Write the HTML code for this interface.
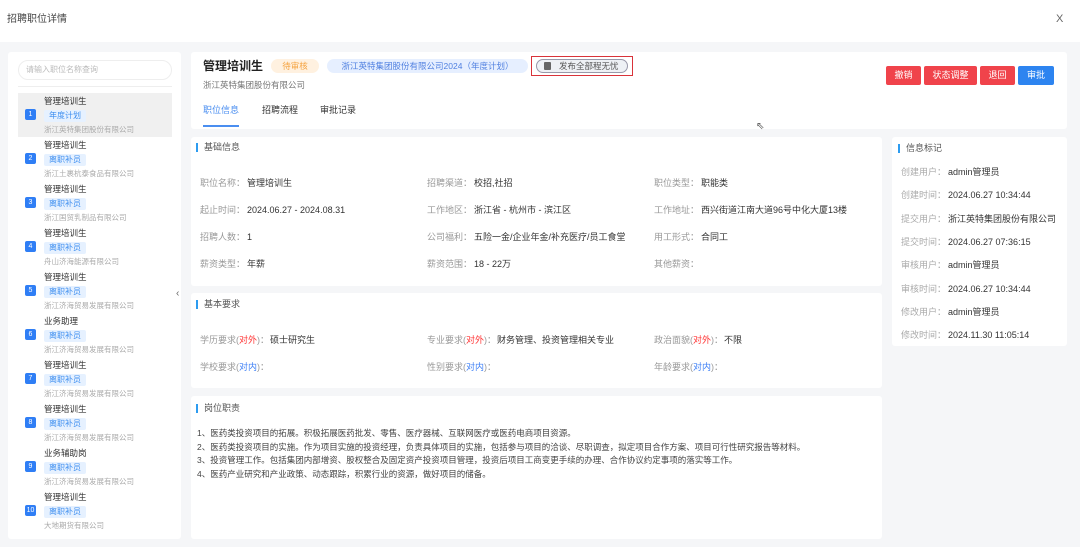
<!DOCTYPE html>
<html><head><meta charset="utf-8"><style>
*{margin:0;padding:0;box-sizing:border-box}
body{width:1080px;height:547px;overflow:hidden;background:#fff;font-family:"Liberation Sans","Noto Sans CJK SC",sans-serif;color:#333;font-size:9px;position:relative}
.a{position:absolute;white-space:nowrap;line-height:12px}
.card{position:absolute;background:#fff;border-radius:3px}
.gray{color:#999}
.sec{position:absolute;font-size:9px;color:#555;padding-left:6px;border-left:2px solid #2d9cf0;line-height:9px}
.tag{display:inline-block;background:#e6f1ff;color:#3d8ef0;font-size:8px;padding:0 5px;line-height:12px;border-radius:2px}
.num{position:absolute;left:25px;width:11px;height:11px;background:#2f7ef5;color:#fff;font-size:7px;text-align:center;line-height:11px;border-radius:2px}
.btn{position:absolute;top:66px;height:19px;line-height:19px;color:#fff;font-size:9px;text-align:center;border-radius:2px;background:#f0434b}
.r{color:#f33}.b{color:#3d7ff5}
</style></head><body>
<div class="a" style="left:7px;top:14px;font-size:10px;color:#444">招聘职位详情</div>
<div class="a" style="left:1056px;top:13px;font-size:11px;color:#666">X</div>
<div style="position:absolute;left:0;top:42px;width:1080px;height:505px;background:#f5f6f8"></div>

<div class="card" style="left:8px;top:52px;width:173px;height:487px"></div>
<div style="position:absolute;left:18px;top:60px;width:154px;height:20px;border:1px solid #eee;border-radius:10px"></div>
<div class="a" style="left:26px;top:64px;font-size:8px;color:#bbb">请输入职位名称查询</div>
<div style="position:absolute;left:18px;top:86px;width:154px;height:1px;background:#eee"></div>
<div style="position:absolute;left:18px;top:93px;width:154px;height:44px;background:#f0f0f0"></div>
<div id="list"></div>
<div class="a" style="left:176px;top:288px;width:11px;height:14px;font-size:10px;color:#666">‹</div>

<div class="card" style="left:191px;top:52px;width:876px;height:77px"></div>
<div class="a" style="left:203px;top:59px;font-size:12px;font-weight:bold;color:#222;line-height:14px">管理培训生</div>
<div class="a" style="left:271px;top:59px;width:48px;height:14px;background:#fff1e0;color:#f5a340;border-radius:7px;font-size:8.5px;text-align:center;line-height:14px">待审核</div>
<div class="a" style="left:327px;top:59px;width:201px;height:14px;background:#e6efff;color:#5080e0;border-radius:7px;font-size:8.5px;text-align:center;line-height:14px">浙江英特集团股份有限公司2024（年度计划）</div>
<div class="a" style="left:531px;top:56px;width:102px;height:20px;border:1.5px solid #d9333a"></div>
<div class="a" style="left:536px;top:59px;width:92px;height:14px;border:1px solid #99a;background:#eef1f5;border-radius:7px;font-size:8.5px;color:#555;line-height:12px;padding-left:22px">发布全部程无忧</div>
<div class="a" style="left:544px;top:62px;width:7px;height:8px;background:#666;border-radius:1px"></div>
<div class="a" style="left:203px;top:79px;font-size:8.5px;color:#777">浙江英特集团股份有限公司</div>
<div class="a" style="left:203px;top:104px;font-size:9px;color:#4a8ef0">职位信息</div>
<div class="a" style="left:203px;top:125px;width:36px;height:2px;background:#4a8ef0"></div>
<div class="a" style="left:262px;top:104px;font-size:9px">招聘流程</div>
<div class="a" style="left:320px;top:104px;font-size:9px">审批记录</div>
<div class="btn" style="left:886px;width:35px">撤销</div>
<div class="btn" style="left:924px;width:53px">状态调整</div>
<div class="btn" style="left:980px;width:35px">退回</div>
<div class="btn" style="left:1018px;width:36px;background:#2d84f0">审批</div>
<div class="a" style="left:756px;top:121px;font-size:10px;color:#555">⇖</div>

<div class="card" style="left:191px;top:137px;width:691px;height:149px"></div>
<div class="sec" style="left:196px;top:143px">基础信息</div>
<div id="basic"></div>

<div class="card" style="left:191px;top:293px;width:691px;height:95px"></div>
<div class="sec" style="left:196px;top:300px">基本要求</div>
<div class="a gray" style="left:200px;top:334px">学历要求(<span class="r">对外</span>)：</div><div class="a" style="left:270px;top:334px">硕士研究生</div>
<div class="a gray" style="left:427px;top:334px">专业要求(<span class="r">对外</span>)：</div><div class="a" style="left:497px;top:334px">财务管理、投资管理相关专业</div>
<div class="a gray" style="left:654px;top:334px">政治面貌(<span class="r">对外</span>)：</div><div class="a" style="left:724px;top:334px">不限</div>
<div class="a gray" style="left:200px;top:361px">学校要求(<span class="b">对内</span>)：</div>
<div class="a gray" style="left:427px;top:361px">性别要求(<span class="b">对内</span>)：</div>
<div class="a gray" style="left:654px;top:361px">年龄要求(<span class="b">对内</span>)：</div>

<div class="card" style="left:191px;top:396px;width:691px;height:143px"></div>
<div class="sec" style="left:196px;top:404px">岗位职责</div>
<div class="a" style="left:197px;top:427px;font-size:8.5px;line-height:13.5px;color:#444">1、医药类投资项目的拓展。积极拓展医药批发、零售、医疗器械、互联网医疗或医药电商项目资源。<br>2、医药类投资项目的实施。作为项目实施的投资经理，负责具体项目的实施，包括参与项目的洽谈、尽职调查，拟定项目合作方案、项目可行性研究报告等材料。<br>3、投资管理工作。包括集团内部增资、股权整合及固定资产投资项目管理，投资后项目工商变更手续的办理、合作协议约定事项的落实等工作。<br>4、医药产业研究和产业政策、动态跟踪，积累行业的资源，做好项目的储备。</div>

<div class="card" style="left:892px;top:137px;width:175px;height:209px"></div>
<div class="sec" style="left:898px;top:144px">信息标记</div>
<div id="marks"></div>

<script>
var L=[["管理培训生","年度计划","浙江英特集团股份有限公司"],["管理培训生","离职补员","浙江土裹杭泰食品有限公司"],["管理培训生","离职补员","浙江国贸乳制品有限公司"],["管理培训生","离职补员","舟山济海能源有限公司"],["管理培训生","离职补员","浙江济海贸易发展有限公司"],["业务助理","离职补员","浙江济海贸易发展有限公司"],["管理培训生","离职补员","浙江济海贸易发展有限公司"],["管理培训生","离职补员","浙江济海贸易发展有限公司"],["业务辅助岗","离职补员","浙江济海贸易发展有限公司"],["管理培训生","离职补员","大地期货有限公司"]];
var h="";L.forEach(function(x,i){var y=93+44*i;
h+='<div class="a" style="left:44px;top:'+(y+2)+'px;font-size:8.5px;color:#333">'+x[0]+'</div>';
h+='<div class="a" style="left:44px;top:'+(y+16)+'px"><span class="tag">'+x[1]+'</span></div>';
h+='<div class="a" style="left:44px;top:'+(y+31)+'px;font-size:7.5px;color:#aaa">'+x[2]+'</div>';
h+='<div class="num" style="top:'+(y+16)+'px">'+(i+1)+'</div>';});
document.getElementById("list").innerHTML=h;
var B=[[["职位名称：","管理培训生"],["招聘渠道：","校招,社招"],["职位类型：","职能类"]],[["起止时间：","2024.06.27 - 2024.08.31"],["工作地区：","浙江省 - 杭州市 - 滨江区"],["工作地址：","西兴街道江南大道96号中化大厦13楼"]],[["招聘人数：","1"],["公司福利：","五险一金/企业年金/补充医疗/员工食堂"],["用工形式：","合同工"]],[["薪资类型：","年薪"],["薪资范围：","18 - 22万"],["其他薪资：",""]]];
h="";B.forEach(function(r,i){var y=177+27*i;r.forEach(function(c,j){var x=200+227*j;
h+='<div class="a gray" style="left:'+x+'px;top:'+y+'px">'+c[0]+'</div><div class="a" style="left:'+(x+47)+'px;top:'+y+'px">'+c[1]+'</div>';});});
document.getElementById("basic").innerHTML=h;
var M=[["创建用户：","admin管理员"],["创建时间：","2024.06.27 10:34:44"],["提交用户：","浙江英特集团股份有限公司"],["提交时间：","2024.06.27 07:36:15"],["审核用户：","admin管理员"],["审核时间：","2024.06.27 10:34:44"],["修改用户：","admin管理员"],["修改时间：","2024.11.30 11:05:14"]];
h="";M.forEach(function(c,i){var y=Math.round(166+23.3*i);
h+='<div class="a" style="left:901px;top:'+y+'px;color:#aaa">'+c[0]+'</div><div class="a" style="left:948px;top:'+y+'px">'+c[1]+'</div>';});
document.getElementById("marks").innerHTML=h;
</script>
</body></html>
